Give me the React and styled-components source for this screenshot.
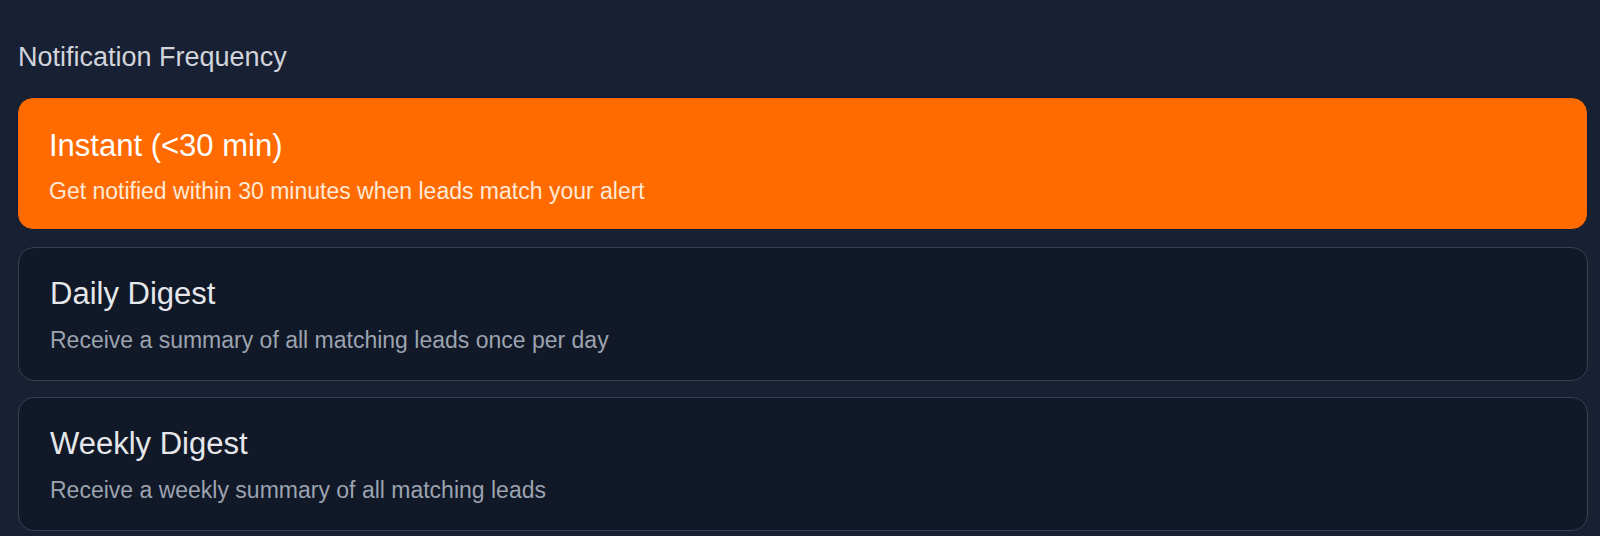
import styled, { createGlobalStyle } from "styled-components"

const GlobalStyle = createGlobalStyle`
  html, body {
    margin: 0;
    padding: 0;
    background-color: #182033;
    font-family: "Liberation Sans", Arial, sans-serif;
  }
`

const Page = styled.div`
  min-height: 536px;
  box-sizing: border-box;
  padding: 42px 12px 0 17px;
  display: flex;
  flex-direction: column;
`

const SectionTitle = styled.h2`
  margin: 0 0 25px 1px;
  font-size: 27px;
  line-height: 30px;
  font-weight: 400;
  color: #d1d5db;
`

const OptionList = styled.div`
  display: flex;
  flex-direction: column;
  gap: 16.5px;
`

const OptionCard = styled.button`
  display: flex;
  flex-direction: column;
  align-items: flex-start;
  gap: ${(p) => (p.$active ? "12px" : "13px")};
  box-sizing: border-box;
  padding: ${(p) => (p.$active ? "30px 31px 23px" : "28px 31px 25px")};
  margin-left: ${(p) => (p.$active ? "0" : "1px")};
  width: ${(p) => (p.$active ? "100%" : "calc(100% - 1px)")};
  border-radius: 16px;
  border: 1.5px solid ${(p) => (p.$active ? "#0e1a33" : "#374151")};
  background-color: ${(p) => (p.$active ? "#ff6b00" : "#111827")};
  font-family: inherit;
  text-align: left;
  cursor: pointer;
`

const OptionName = styled.span`
  font-size: 31px;
  line-height: 36px;
  color: ${(p) => (p.$active ? "#ffffff" : "#e5e7eb")};
`

const OptionText = styled.span`
  font-size: 23px;
  line-height: 30px;
  color: ${(p) => (p.$active ? "#ffe9d6" : "#9ca3af")};
`

const options = [
  {
    id: "instant",
    name: "Instant (<30 min)",
    text: "Get notified within 30 minutes when leads match your alert",
  },
  {
    id: "daily",
    name: "Daily Digest",
    text: "Receive a summary of all matching leads once per day",
  },
  {
    id: "weekly",
    name: "Weekly Digest",
    text: "Receive a weekly summary of all matching leads",
  },
]

export default function App() {
  const selected = "instant"
  return (
    <>
      <GlobalStyle />
      <Page>
        <SectionTitle>Notification Frequency</SectionTitle>
        <OptionList>
          {options.map((o) => (
            <OptionCard key={o.id} $active={o.id === selected}>
              <OptionName $active={o.id === selected}>{o.name}</OptionName>
              <OptionText $active={o.id === selected}>{o.text}</OptionText>
            </OptionCard>
          ))}
        </OptionList>
      </Page>
    </>
  )
}
